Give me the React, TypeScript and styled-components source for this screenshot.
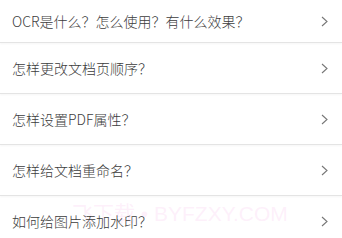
import React from 'react'
import styled, { createGlobalStyle } from 'styled-components'

const GlobalStyle = createGlobalStyle`
    html, body { margin: 0; padding: 0; background: #fff; }
    body { font-family: "Noto Sans CJK SC", "Noto Sans", sans-serif; }
`

const Page = styled.div`
    position: relative;
    width: 342px;
    height: 238px;
    overflow: hidden;
    background: #fff;
`

const List = styled.ul`
    position: relative;
    z-index: 1;
    list-style: none;
    margin: 0;
    padding: 0;
`

const Row = styled.li<{ $height: number; $last?: boolean }>`
    display: flex;
    align-items: center;
    justify-content: space-between;
    height: ${({ $height }) => $height}px;
    padding: 0 14px 0 12px;
    box-sizing: border-box;
    border-bottom: ${({ $last }) => ($last ? 'none' : '1px solid #e4e4e4')};
    box-shadow: ${({ $last }) => ($last ? 'none' : '0 1px 2px rgba(0, 0, 0, 0.04)')};
`

const Title = styled.span`
    font-size: 14px;
    font-weight: 300;
    color: #3c3c3c;
    line-height: 1;
`

const Chevron = () => (
    <svg width="7" height="11" viewBox="0 0 7 11" fill="none">
        <path d="M1 1l5 4.5L1 10" stroke="#777" strokeWidth="1.1" />
    </svg>
)

// faint site watermark, sits behind the last row
const Watermark = styled.div`
    position: absolute;
    z-index: 0;
    left: 72px;
    top: 202px;
    font-family: "Liberation Sans", "Noto Sans CJK SC", sans-serif;
    font-size: 21px;
    line-height: 24px;
    color: rgba(250, 205, 240, 0.3);
    pointer-events: none;
    white-space: nowrap;
`

const questions = [
    'OCR是什么？怎么使用？有什么效果？',
    '怎样更改文档页顺序？',
    '怎样设置PDF属性？',
    '怎样给文档重命名？',
    '如何给图片添加水印？',
]

export default function App() {
    return (
        <Page>
            <GlobalStyle />
            <Watermark>飞下载 • BYFZXY.COM</Watermark>
            <List>
                {questions.map((q, i) => (
                    <Row
                        key={q}
                        $height={i === 0 ? 43 : i === questions.length - 1 ? 50 : 51}
                        $last={i === questions.length - 1}
                    >
                        <Title>{q}</Title>
                        <Chevron />
                    </Row>
                ))}
            </List>
        </Page>
    )
}
